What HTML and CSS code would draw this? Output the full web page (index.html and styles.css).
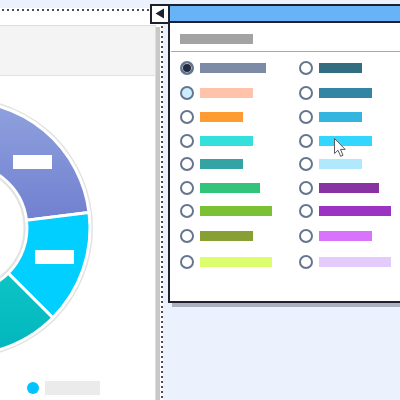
FILE: index.html
```html
<!DOCTYPE html>
<html>
<head>
<meta charset="utf-8">
<link rel="stylesheet" href="styles.css">
</head>
<body>
  <div class="left-pane">
    <div class="card">
      <div class="card-head"></div>
      <svg class="donut" width="174" height="298" viewBox="-19 76 174 298">
        <defs>
          <linearGradient id="gPurple" gradientUnits="userSpaceOnUse" x1="0" y1="100" x2="0" y2="228">
            <stop offset="0" stop-color="#91a2de"/>
            <stop offset="1" stop-color="#6e7ecf"/>
          </linearGradient>
          <linearGradient id="gTeal" gradientUnits="userSpaceOnUse" x1="0" y1="230" x2="0" y2="360">
            <stop offset="0" stop-color="#14caca"/>
            <stop offset="1" stop-color="#00b6bd"/>
          </linearGradient>
        </defs>
        <circle cx="-37" cy="228" r="130" fill="#e3e3e3"/>
        <path d="M -164 228 A 127 127 0 0 1 89.05 212.52 L 26.52 220.2 A 64 64 0 0 0 -101 228 Z" fill="url(#gPurple)" stroke="#fff" stroke-width="3"/>
        <path d="M 89.05 212.52 A 127 127 0 0 1 52.8 317.8 L 8.25 273.25 A 64 64 0 0 0 26.52 220.2 Z" fill="#00cfff" stroke="#fff" stroke-width="3"/>
        <path d="M 52.8 317.8 A 127 127 0 0 1 -164 228 L -101 228 A 64 64 0 0 0 8.25 273.25 Z" fill="url(#gTeal)" stroke="#fff" stroke-width="3"/>
        <circle cx="-37" cy="228" r="61.5" fill="#fff" stroke="#e2e2e2" stroke-width="2"/>
        <rect x="13" y="155" width="39" height="14" fill="#fff"/>
        <rect x="35" y="250" width="39" height="14" fill="#fff"/>
      </svg>
      <div class="legend">
        <span class="legend-dot"></span>
        <span class="legend-label"></span>
      </div>
    </div>
  </div>

  <div class="popup">
    <button class="back-btn" type="button" aria-label="Back">
      <svg width="16" height="16" viewBox="0 0 16 16"><polygon points="3.5,7.5 12,2.5 12,12.5" fill="#1e2030"/></svg>
    </button>
    <div class="popup-head"></div>
    <div class="popup-title"></div>
    <div class="divider"></div>
    <div class="options">
      <div class="opt"><span class="radio selected"></span><span class="bar s1" style="width:66px"></span></div>
      <div class="opt"><span class="radio"></span><span class="bar s2" style="width:43px"></span></div>

      <div class="opt"><span class="radio hover"></span><span class="bar s3" style="width:53px"></span></div>
      <div class="opt"><span class="radio"></span><span class="bar s4" style="width:53px"></span></div>

      <div class="opt"><span class="radio"></span><span class="bar s5" style="width:43px"></span></div>
      <div class="opt"><span class="radio"></span><span class="bar s6" style="width:43px"></span></div>

      <div class="opt"><span class="radio"></span><span class="bar s7" style="width:53px"></span></div>
      <div class="opt"><span class="radio"></span><span class="bar s8" style="width:53px"></span></div>

      <div class="opt"><span class="radio"></span><span class="bar s9" style="width:43px"></span></div>
      <div class="opt"><span class="radio"></span><span class="bar s10" style="width:43px"></span></div>

      <div class="opt"><span class="radio"></span><span class="bar s11" style="width:60px"></span></div>
      <div class="opt"><span class="radio"></span><span class="bar s12" style="width:60px"></span></div>

      <div class="opt"><span class="radio"></span><span class="bar s13" style="width:72px"></span></div>
      <div class="opt"><span class="radio"></span><span class="bar s14" style="width:72px"></span></div>

      <div class="opt"><span class="radio"></span><span class="bar s15" style="width:53px"></span></div>
      <div class="opt"><span class="radio"></span><span class="bar s16" style="width:53px"></span></div>

      <div class="opt"><span class="radio"></span><span class="bar s17" style="width:72px"></span></div>
      <div class="opt"><span class="radio"></span><span class="bar s18" style="width:72px"></span></div>
    </div>
    <svg class="cursor" width="14" height="20" viewBox="0 0 14 20">
      <path d="M0.5 0.5 L0.5 15.5 L4 12.2 L6.6 18.3 L9 17.3 L6.5 11.4 L11.2 11.4 Z" fill="#fff" stroke="#5a5a5a" stroke-width="1" stroke-linejoin="round"/>
    </svg>
  </div>
</body>
</html>
```

FILE: styles.css
```css
html, body {
  margin: 0;
  padding: 0;
}

body {
  width: 400px;
  height: 400px;
  overflow: hidden;
  background: #ebf2fd;
  display: flex;
  align-items: flex-start;
  font-family: "Liberation Sans", Arial, sans-serif;
}

.left-pane {
  position: relative;
  flex: 0 0 161px;
  height: 389px;
  margin-top: 9px;
  background: #fff;
  border-top: 2px solid #fff;
  border-right: 2px solid #fff;
  box-shadow: 0 -1px 0 #fff;
}

.left-pane::before {
  content: "";
  position: absolute;
  left: 2px;
  right: -2px;
  top: -2px;
  height: 2px;
  background: repeating-linear-gradient(to right, #4a4e5a 0 2px, transparent 2px 5px);
}

.left-pane::after {
  content: "";
  position: absolute;
  right: -2px;
  top: 0;
  bottom: 0;
  width: 2px;
  background: repeating-linear-gradient(to bottom, #4a4e5a 0 2px, transparent 2px 5px);
}

.card {
  width: 174px;
  height: 374px;
  margin-top: 14px;
  margin-left: -20px;
  background: #fff;
  border: 1px solid #dedede;
  border-bottom: none;
  box-shadow: 4px 2px 0 #c8c8c8;
}

.card-head {
  height: 49px;
  background: #f4f4f4;
  border-bottom: 1px solid #e2e2e2;
}

.donut {
  display: block;
}

.legend {
  display: flex;
  align-items: center;
  gap: 6px;
  margin-top: 7px;
  padding-left: 46px;
  height: 14px;
}

.legend-dot {
  width: 12px;
  height: 12px;
  border-radius: 50%;
  background: #00c3ff;
}

.legend-label {
  width: 55px;
  height: 14px;
  background: #ebebeb;
}

.popup {
  position: relative;
  flex: 0 0 auto;
  width: 240px;
  height: 295px;
  margin-top: 4px;
  margin-left: 5px;
  background: #fff;
  border: 2px solid #1e2030;
  box-shadow: 4px 4px 0 #abb2bf;
}

.popup-head {
  height: 15px;
  background: #68b2f8;
  border-bottom: 2px solid #1e2030;
}

.back-btn {
  position: absolute;
  left: -20px;
  top: -2px;
  width: 20px;
  height: 20px;
  padding: 0;
  margin: 0;
  box-sizing: border-box;
  border: 2px solid #1e2030;
  background: #fff;
  display: block;
}

.back-btn svg {
  display: block;
}

.popup-title {
  width: 73px;
  height: 10px;
  margin: 11px 0 0 10px;
  background: #a3a3a3;
}

.divider {
  height: 1px;
  margin: 7px 0 0 1px;
  background: #a9a9a9;
}

.options {
  display: grid;
  grid-template-columns: 119px 1fr;
  grid-template-rows: 26px 24px 24px 23px 24px 23px 24px 26px 26px;
  align-items: center;
  margin-top: 3px;
  padding-left: 10px;
}

.opt {
  display: flex;
  align-items: center;
  gap: 6px;
}

.radio {
  box-sizing: border-box;
  width: 14px;
  height: 14px;
  border-radius: 50%;
  border: 2px solid #66758f;
  background: #fff;
  flex: 0 0 auto;
}

.radio.selected {
  background: #262a3b;
  box-shadow: inset 0 0 0 1px #a9c4e4;
}

.radio.hover {
  background: #c9eeff;
}

.bar {
  height: 10px;
  display: block;
}

.s1 { background: #7d8ba6; }
.s2 { background: #336e80; }
.s3 { background: #ffc2ab; }
.s4 { background: #3386a3; }
.s5 { background: #ff9b33; }
.s6 { background: #33b5e0; }
.s7 { background: #33e0dc; }
.s8 { background: #33d6ff; }
.s9 { background: #33a3a3; }
.s10 { background: #b0e8fc; }
.s11 { background: #33c47b; }
.s12 { background: #8733a3; }
.s13 { background: #7cc033; }
.s14 { background: #9d33c2; }
.s15 { background: #88a033; }
.s16 { background: #d873fc; }
.s17 { background: #dcfd6c; }
.s18 { background: #e3ccfb; }

.cursor {
  position: absolute;
  left: 164px;
  top: 132px;
}
```
